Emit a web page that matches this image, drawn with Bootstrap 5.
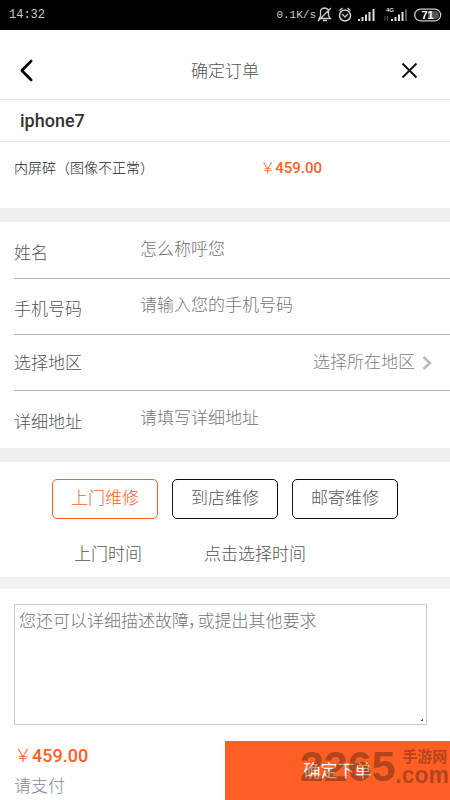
<!DOCTYPE html>
<html lang="zh-CN">
<head>
<meta charset="utf-8">
<meta name="viewport" content="width=device-width, initial-scale=1">
<title>确定订单</title>
<link href="https://cdn.jsdelivr.net/npm/bootstrap@5.3.0/dist/css/bootstrap.min.css" rel="stylesheet">
<style>
  :root { --accent: #ff5f24; --ink: #555; }
  body { font: 300 17px/24px Roboto, "Noto Sans CJK SC", sans-serif; color: var(--ink); background: #fff; }
  .status-bar { height: 30px; font: 12px/16px "Liberation Mono", monospace; color: #ccc; padding: 0 8px 0 9px; }
  .status-rate { font-size: 11px; }
  .title-bar { height: 70px; padding: 12px 31px 0 18px; border-bottom: 1px solid #e2e2e2; }
  .title-bar h1 { font-size: 17px; font-weight: 300; line-height: 24px; padding-left: 13px; }
  .icon-btn { border: 0; background: none; padding: 0; display: flex; }
  .device { height: 42px; padding: 0 20px; font-size: 18px; font-weight: 500; color: #333; border-bottom: 1px solid #e8e8e8; }
  .fault { height: 66px; padding: 14px; font-size: 14px; color: #222; }
  .tight { font-feature-settings: "palt"; }
  .price { color: var(--accent); font-weight: 500; }
  .yen { font-weight: 300; }
  .fault .price { font-size: 15px; }
  .band { height: 14px; background: #efefef; }
  .band-slim { height: 12px; background: #f2f2f2; }
  .fields { padding-left: 14px; }
  .field-row { height: 56px; }
  .field-row:last-child { height: 58px; }
  .field-row + .field-row { border-top: 1px solid #b4b4b4; }
  .field-row label, .field-name { width: 126px; padding-top: 5px; }
  .field-row .field-name { padding-top: 0; }
  .plain-input { border: 0; outline: 0; padding: 0 0 3px; background: none; font-weight: 300; min-width: 0; }
  .plain-input::placeholder, .notes::placeholder { color: #757575; opacity: 1; }
  .region { border: 0; background: none; padding: 0 18px 2px 0; gap: 7px; color: #808080; font-weight: 300; }
  .region svg { margin-top: 3px; }
  .services { padding: 17px 0 0; gap: 14px; }
  .service { width: 106px; height: 40px; padding: 0; border: 1px solid #111; border-radius: 5px; font-size: 17px; font-weight: 300; color: var(--ink); }
  .service.active, .service.active:hover { color: var(--accent) !important; border-color: var(--accent) !important; background: #fff !important; }
  .visit { height: 58px; padding: 12px 74px 0; }
  .visit-name { width: 130px; }
  .visit button { border: 0; background: none; padding: 0; color: inherit; font-weight: 300; }
  .notes-box { padding: 15px 23px 16px 14px; }
  .notes { height: 121px; padding: 4px; border: 1px solid #ccc; border-radius: 0; font-size: 17px; font-weight: 300; resize: vertical; display: block; }
  .notes::-webkit-resizer { background: radial-gradient(circle at 75% 75%, #555 1px, transparent 1px); }
  .pay-bar { height: 59px; }
  .pay-bar .price { font-size: 18px; }
  .due { padding: 3px 14px 0; }
  .due small { font-size: 17px; color: #808b9e; margin-top: 6px; }
  .submit { background: var(--accent); color: #fff; border: 0; font-weight: 400; }
  .stamp { position: absolute; right: 1px; bottom: 12px; color: rgba(70, 30, 20, .42); pointer-events: none; font: 700 43px/44px "Liberation Sans", "Noto Sans CJK SC", sans-serif; }
  .stamp-side { font-size: 23px; line-height: 18px; }
  .stamp-side span:first-child { font-size: 15px; padding-left: 7px; }
</style>
<script src="https://cdn.jsdelivr.net/npm/bootstrap@5.3.0/dist/js/bootstrap.bundle.min.js"></script>
</head>
<body>
<div class="status-bar bg-black d-flex align-items-center justify-content-between">
  <span>14:32</span>
  <div class="d-flex align-items-center">
    <span class="status-rate">0.1K/s</span>
    <svg width="126" height="20" viewBox="318 5 126 20" fill="none" stroke="#ccc">
      <path stroke-width="1.3" d="M321 18.500h11.500l-2-2.500v-4.500q0-3-4-3.500-4 .5-4 4v4zM333 8l-13 13M325 20.500h4"/>
      <circle cx="347" cy="15.500" r="5.500" stroke-width="1.500"/>
      <path stroke-width="1.300" d="M344 14l3 3 3-3M341.500 10.500l3-2.500M352.500 10.500l-3-2.500"/>
      <g stroke="none" fill="#ddd"><path d="M360 19h2v2h-2zM363.500 17h2v4h-2zM367 14.500h2v6.500h-2zM370.500 12h2v9h-2zM374.500 9h2v12h-2z"/>
      <path d="M393 19h2v2h-2zM396.500 17h2v4h-2zM400 14.500h2v6.500h-2zM403.500 12h2v9h-2z"/><path fill="#555" d="M407 9h2v12h-2zM386.500 16h1v5h-1zM389 16h1v5h-1z"/>
      <path fill="#555" d="M430 11h7a4 4 0 0 1 0 8h-7z"/>
      <text x="388" y="12" font-size="6" font-weight="700" font-family="Liberation Sans">4G</text>
      <text x="423.500" y="19" font-size="11" font-weight="700" font-family="Liberation Sans" fill="#fff">71</text></g>
      <rect x="416.700" y="9.200" width="26" height="11.600" rx="5.800" stroke-width="1.300"/>
    </svg>
  </div>
</div>

<header class="title-bar d-flex align-items-center justify-content-between">
  <button class="icon-btn" aria-label="返回"><svg width="18" height="26" fill="none" stroke="#000" stroke-width="2.600" stroke-linecap="round" stroke-linejoin="round"><path d="M13.200 3L3.800 12.500l9.400 9.500"/></svg></button>
  <h1 class="m-0 flex-grow-1 text-center">确定订单</h1>
  <button class="icon-btn" aria-label="关闭"><svg width="18" height="20" fill="none" stroke="#111" stroke-width="1.900"><path d="M1.500 2.500l14 14M15.500 2.500l-14 14"/></svg></button>
</header>

<main>
  <div class="device d-flex align-items-center">iphone7</div>
  <div class="fault row g-0">
    <span class="col-7">内屏碎（图像不正常）</span>
    <span class="col-5 price"><span class="yen">￥</span>459.00</span>
  </div>
  <div class="band"></div>

  <form>
    <div class="fields">
      <div class="field-row d-flex align-items-center">
        <label for="name">姓名</label><input id="name" class="plain-input flex-grow-1" type="text" placeholder="怎么称呼您">
      </div>
      <div class="field-row d-flex align-items-center">
        <label for="phone">手机号码</label><input id="phone" class="plain-input flex-grow-1" type="tel" placeholder="请输入您的手机号码">
      </div>
      <div class="field-row d-flex align-items-center">
        <span class="field-name" id="region-name">选择地区</span>
        <button type="button" class="region flex-grow-1 d-flex align-items-center justify-content-end" aria-describedby="region-name">选择所在地区
          <svg width="10" height="16" fill="none" stroke="#b8b8b8" stroke-width="2.400"><path d="M1.500 2l6.500 6-6.500 6"/></svg>
        </button>
      </div>
      <div class="field-row d-flex align-items-center">
        <label for="address">详细地址</label><input id="address" class="plain-input flex-grow-1" type="text" placeholder="请填写详细地址">
      </div>
    </div>
    <div class="band"></div>

    <div class="services d-flex justify-content-center">
      <button type="button" class="btn service active">上门维修</button>
      <button type="button" class="btn service">到店维修</button>
      <button type="button" class="btn service">邮寄维修</button>
    </div>
    <div class="visit d-flex align-items-center">
      <span class="visit-name">上门时间</span>
      <button type="button">点击选择时间</button>
    </div>
    <div class="band-slim"></div>

    <div class="notes-box">
      <textarea class="notes tight w-100" aria-label="故障描述" placeholder="您还可以详细描述故障，或提出其他要求"></textarea>
    </div>

    <div class="pay-bar d-flex position-relative">
      <div class="due w-50 d-flex flex-column">
        <span class="price"><span class="yen">￥</span>459.00</span>
        <small>请支付</small>
      </div>
      <button type="submit" class="submit w-50">确定下单</button>
      <div class="stamp d-flex align-items-center">
        <span>2265</span>
        <span class="stamp-side d-flex flex-column"><span>手游网</span><span>.com</span></span>
      </div>
    </div>
  </form>
</main>
</body>
</html>
